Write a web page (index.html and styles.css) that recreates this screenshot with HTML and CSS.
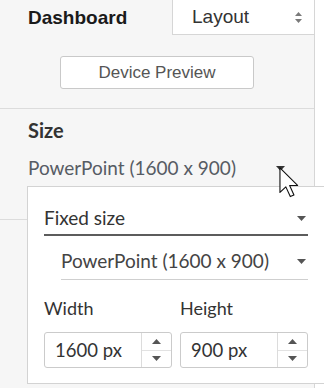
FILE: index.html
```html
<!DOCTYPE html>
<html>
<head>
    <link rel="stylesheet" href="styles.css">
</head>
<body>
    <!-- left side panel -->
    <div class="panel">
        <div class="panel-head">
            <h1 class="title">Dashboard</h1>
            <div class="tab">
                <span>Layout</span>
                <svg class="updown" width="7" height="11" viewBox="0 0 7 11"><path d="M3.5 0 L7 4 L0 4 Z M0 7 L7 7 L3.5 11 Z" fill="#7a7a7a"/></svg>
            </div>
        </div>
        <div class="preview-row">
            <button class="preview-btn">Device Preview</button>
        </div>
        <div class="size-section">
            <h2 class="section-title">Size</h2>
            <div class="size-value">
                <span>PowerPoint (1600 x 900)</span>
                <svg width="9" height="5" viewBox="0 0 9 5"><path d="M0 0 L9 0 L4.5 5 Z" fill="#333"/></svg>
            </div>
        </div>
    </div>

    <!-- size dropdown popup -->
    <div class="popup">
        <div class="popup-body">
            <div class="select select-main">
                <span>Fixed size</span>
                <svg width="9" height="5" viewBox="0 0 9 5"><path d="M0 0 L9 0 L4.5 5 Z" fill="#555"/></svg>
            </div>
            <div class="select select-sub">
                <span>PowerPoint (1600 x 900)</span>
                <svg width="9" height="5" viewBox="0 0 9 5"><path d="M0 0 L9 0 L4.5 5 Z" fill="#555"/></svg>
            </div>
            <div class="dims">
                <div class="field-label">Width</div>
                <div class="field-label">Height</div>
                <div class="spin">
                    <div class="spin-value">1600 px</div>
                    <div class="spin-btns">
                        <div class="spin-btn"><svg width="9" height="5" viewBox="0 0 9 5"><path d="M0 5 L9 5 L4.5 0 Z" fill="#555"/></svg></div>
                        <div class="spin-btn"><svg width="9" height="5" viewBox="0 0 9 5"><path d="M0 0 L9 0 L4.5 5 Z" fill="#555"/></svg></div>
                    </div>
                </div>
                <div class="spin">
                    <div class="spin-value">900 px</div>
                    <div class="spin-btns">
                        <div class="spin-btn"><svg width="9" height="5" viewBox="0 0 9 5"><path d="M0 5 L9 5 L4.5 0 Z" fill="#555"/></svg></div>
                        <div class="spin-btn"><svg width="9" height="5" viewBox="0 0 9 5"><path d="M0 0 L9 0 L4.5 5 Z" fill="#555"/></svg></div>
                    </div>
                </div>
            </div>
        </div>
    </div>

    <!-- mouse pointer -->
    <svg class="cursor" width="21" height="31" viewBox="0 0 13 19.5">
        <path d="M0.5 0.5 L0.5 16 L4.2 12.5 L7 18.6 L9.3 17.6 L6.6 11.6 L11.6 11.6 Z" fill="#fff" stroke="#111" stroke-width="0.7" stroke-linejoin="round"/>
    </svg>
</body>
</html>
```

FILE: styles.css
```css
/* page */
body {
    margin: 0;
    width: 324px;
    height: 388px;
    overflow: hidden;
    position: relative;
    background-color: #fff;
    font-family: Lato, "Liberation Sans", sans-serif;
}

/* left panel */
.panel {
    width: 314px;
    height: 388px;
    background-color: #f6f6f6;
    border-right: 1px solid #d6d6d6;
}

.panel-head {
    display: flex;
    height: 35px;
}

.title {
    flex: 1;
    margin: 0;
    padding-left: 28px;
    font-family: "Liberation Sans", Arial, sans-serif;
    font-size: 19px;
    font-weight: bold;
    line-height: 35px;
    color: #1a1a1a;
}

.tab {
    width: 110px;
    display: flex;
    align-items: center;
    justify-content: space-between;
    padding: 0 12px 0 19px;
    background-color: #fff;
    border-left: 1px solid #d6d6d6;
    border-bottom: 1px solid #d6d6d6;
    font-family: "Liberation Sans", Arial, sans-serif;
    font-size: 19px;
    color: #333;
}

.preview-row {
    display: flex;
    justify-content: center;
    padding: 21px 0 19px;
    border-bottom: 1px solid #dcdcdc;
}

.preview-btn {
    width: 194px;
    height: 33px;
    padding: 0;
    background-color: #fff;
    border: 1px solid #c9c9c9;
    border-radius: 3px;
    font-family: "Liberation Sans", Arial, sans-serif;
    font-size: 17px;
    color: #555;
}

/* size section */
.size-section {
    padding: 10px 29px 41px 28px;
    border-bottom: 1px solid #dcdcdc;
}

.section-title {
    margin: 0;
    font-size: 20px;
    font-weight: bold;
    line-height: 22px;
    color: #333;
}

.size-value {
    display: flex;
    align-items: center;
    justify-content: space-between;
    margin-top: 17px;
    font-size: 19px;
    line-height: 20px;
    color: #565c64;
}

/* dropdown popup */
.popup {
    position: absolute;
    left: 27px;
    right: 0;
    top: 186px;
    padding: 21px 0 15px 16px;
    background-color: #fff;
    border: 1px solid #d3d3d3;
    border-right: none;
}

.popup-body {
    width: 264px;
}

.select {
    display: flex;
    align-items: center;
    justify-content: space-between;
    padding-right: 2px;
    font-size: 19px;
    line-height: 20px;
    color: #333;
}

.select-main {
    padding-bottom: 6px;
    border-bottom: 2px solid #5c5c5c;
}

.select-sub {
    margin: 15px 0 0 17px;
    padding-bottom: 8px;
    border-bottom: 1px solid #cfcfcf;
    color: #444;
}

.dims {
    display: grid;
    grid-template-columns: 128px 128px;
    column-gap: 8px;
    margin-top: 18px;
}

.field-label {
    font-size: 18px;
    line-height: 20px;
    color: #333;
    margin-bottom: 14px;
}

.spin {
    display: flex;
    height: 34px;
    border: 1px solid #cbcbcb;
    border-radius: 3px;
}

.spin-value {
    flex: 1;
    padding-left: 10px;
    font-size: 18.5px;
    line-height: 34px;
    color: #333;
}

.spin-btns {
    width: 29px;
    display: flex;
    flex-direction: column;
    border-left: 1px solid #dcdcdc;
}

.spin-btn {
    flex: 1;
    display: flex;
    align-items: center;
    justify-content: center;
}

.spin-btn + .spin-btn {
    border-top: 1px solid #e2e2e2;
}

/* pointer over the size dropdown */
.cursor {
    position: absolute;
    left: 279px;
    top: 167px;
}
```
